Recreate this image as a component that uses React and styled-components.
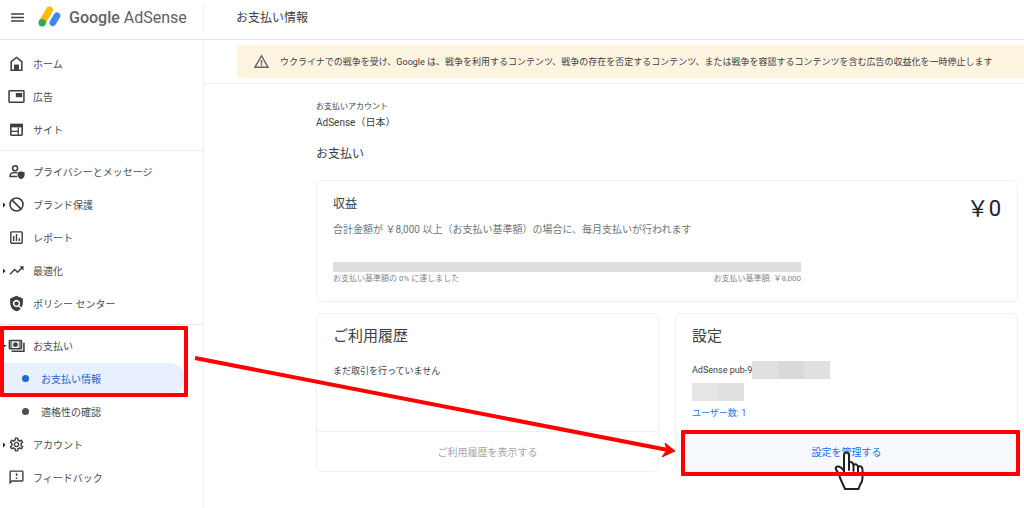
import React from 'react';
import styled, { createGlobalStyle, css } from 'styled-components';
import {
  MdArrowDropDown,
  MdArrowRight,
  MdMenu,
  MdOutlineAssessment,
  MdOutlineFeedback,
  MdOutlineSettings,
  MdPolicy,
  MdTrendingUp,
  MdWarningAmber,
} from 'react-icons/md';

const HomeIcon = () => (
  <svg viewBox="0 0 24 24" aria-hidden="true">
    <path d="M4.500 21.500V9.500L12 3.500l7.500 6v12z" fill="none" stroke="currentColor" strokeWidth="2.200" />
    <path d="M8.500 21v-7.500h7V21z" fill="currentColor" />
  </svg>
);

const AdsIcon = () => (
  <svg viewBox="0 0 24 24" aria-hidden="true">
    <rect x="1.500" y="4" width="21" height="16" rx="1" fill="none" stroke="currentColor" strokeWidth="2.200" />
    <path d="M11 7h9v6h-9z" fill="currentColor" />
  </svg>
);

const SitesIcon = () => (
  <svg viewBox="0 0 24 24" aria-hidden="true">
    <rect x="4" y="5" width="16" height="15" rx="1" fill="none" stroke="currentColor" strokeWidth="2.200" />
    <path d="M3 4h18v5H3z" fill="currentColor" />
    <path d="M4 14.500h10M14.500 9v11" fill="none" stroke="currentColor" strokeWidth="1.800" />
  </svg>
);

const PrivacyIcon = () => (
  <svg viewBox="0 0 24 24" aria-hidden="true">
    <g fill="none" stroke="currentColor" strokeWidth="2.200">
      <circle cx="10" cy="7.500" r="3.500" />
      <path d="M13 19H3v-1.500c0-2.500 4-4 7-4 1 0 2 .1 3 .4" />
    </g>
    <path d="M18.500 11.500l5 2v3.200c0 3-2 5.300-5 6.300-3-1-5-3.300-5-6.300v-3.200z" fill="currentColor" />
  </svg>
);

const BlockIcon = () => (
  <svg viewBox="0 0 24 24" aria-hidden="true">
    <g fill="none" stroke="currentColor" strokeWidth="2.300">
      <circle cx="12" cy="12" r="9.200" />
      <path d="M5.500 5.500l13 13" />
    </g>
  </svg>
);

const PaymentsIcon = () => (
  <svg viewBox="0 0 24 24" aria-hidden="true">
    <g fill="none" stroke="currentColor" strokeWidth="2.200">
      <rect x="2" y="5" width="17" height="11.500" rx="1" />
      <path d="M22.500 8v12H5" />
    </g>
    <circle cx="10.500" cy="10.800" r="3.300" fill="currentColor" />
    <path d="M3 6h3v9.500H3zM15 6h3v9.500h-3z" fill="currentColor" opacity=".6" />
  </svg>
);

const Logo = () => (
  <LogoMark viewBox="0 0 24 22" aria-hidden="true">
    <path d="M19 9.700L14.800 16.800" stroke="#4285f4" strokeWidth="6.600" strokeLinecap="round" />
    <path d="M11.500 4L4.500 16" stroke="#fbbc04" strokeWidth="7" strokeLinecap="round" />
    <circle cx="4.200" cy="16.700" r="3.700" fill="#34a853" />
  </LogoMark>
);

const sections = [
  [
    { label: 'ホーム', icon: HomeIcon },
    { label: '広告', icon: AdsIcon },
    { label: 'サイト', icon: SitesIcon },
  ],
  [
    { label: 'プライバシーとメッセージ', icon: PrivacyIcon },
    { label: 'ブランド保護', icon: BlockIcon, arrow: MdArrowRight },
    { label: 'レポート', icon: MdOutlineAssessment },
    { label: '最適化', icon: MdTrendingUp, arrow: MdArrowRight },
    { label: 'ポリシー センター', icon: MdPolicy },
  ],
];

const NavItem = ({ label, icon: Icon, arrow: Arrow }) => (
  <NavLink href="#">
    <Expander>{Arrow && <Arrow />}</Expander>
    <IconBox>
      <Icon />
    </IconBox>
    {label}
  </NavLink>
);

const App = () => {
  return (
    <Page>
      <GlobalStyle />
      <Header>
        <Brand>
          <MenuButton aria-label="メニュー">
            <MdMenu />
          </MenuButton>
          <Logo />
          <BrandName>
            <b>Google</b> AdSense
          </BrandName>
        </Brand>
        <PageTitle>お支払い情報</PageTitle>
      </Header>

      <Body>
        <Sidebar>
          {sections.map((items) => (
            <Section key={items[0].label}>
              {items.map((item) => (
                <NavItem key={item.label} {...item} />
              ))}
            </Section>
          ))}
          <Section>
            <Marked>
              <NavItem label="お支払い" icon={PaymentsIcon} arrow={MdArrowDropDown} />
              <SubLink href="#" $active aria-current="page">
                <Dot />
                お支払い情報
              </SubLink>
              <NavHighlight />
            </Marked>
            <SubLink href="#">
              <Dot />
              適格性の確認
            </SubLink>
            <NavItem label="アカウント" icon={MdOutlineSettings} arrow={MdArrowRight} />
            <NavItem label="フィードバック" icon={MdOutlineFeedback} />
          </Section>
        </Sidebar>

        <Main>
          <BannerArea>
            <Banner>
              <MdWarningAmber />
              ウクライナでの戦争を受け、Google は、戦争を利用するコンテンツ、戦争の存在を否定するコンテンツ、または戦争を容認するコンテンツを含む広告の収益化を一時停止します
            </Banner>
          </BannerArea>

          <Content>
            <AccountLabel>お支払いアカウント</AccountLabel>
            <AccountName>AdSense（日本）</AccountName>
            <Heading>お支払い</Heading>

            <EarningsCard>
              <Progress>
                <CardLabel>収益</CardLabel>
                <Description>
                  合計金額が ￥8,000 以上（お支払い基準額）の場合に、毎月支払いが行われます
                </Description>
                <Track />
                <TrackLabels>
                  <span>お支払い基準額の 0% に達しました</span>
                  <span>お支払い基準額: ￥8,000</span>
                </TrackLabels>
              </Progress>
              <Amount>￥0</Amount>
            </EarningsCard>

            <CardRow>
              <Card>
                <CardBody>
                  <CardTitle>ご利用履歴</CardTitle>
                  <Text>まだ取引を行っていません</Text>
                </CardBody>
                <CardAction disabled>ご利用履歴を表示する</CardAction>
              </Card>
              <Card>
                <CardBody>
                  <CardTitle>設定</CardTitle>
                  <Text>
                    AdSense pub-9
                    <Mask $tones={['#e0e0e0', '#d9d9d9', '#e0e0e0']} />
                  </Text>
                  <MaskRow>
                    <Mask $tones={['#e5e5e5', '#e0e0e0']} />
                  </MaskRow>
                  <UserLink href="#">ユーザー数: 1</UserLink>
                </CardBody>
                <ActionArea>
                  <CardAction $hovered>設定を管理する</CardAction>
                  <HandCursor viewBox="0 0 30 40" aria-hidden="true">
                    <path
                      d="M10 23V4.500Q10 1.500 12.500 1.500T15 4.500V11.500Q18.500 10 19.500 14Q22.500 12 24 15.500Q28.500 14 28.500 19V27Q28.500 31 26 34L24.500 38H11L6.500 28Q5 22 2 18.500Q1 15.500 4 15.500Q7 15.500 10 20"
                      fill="#fff"
                    />
                    <path d="M15 11.500V19M19.500 14V20M24 15.500V21" />
                  </HandCursor>
                  <ActionHighlight />
                </ActionArea>
              </Card>
            </CardRow>
          </Content>
        </Main>
      </Body>

      <Arrow viewBox="0 0 484 104" aria-hidden="true">
        <path d="M1 5L474 97" stroke="#f00" strokeWidth="4" />
        <path d="M481 98L468 104L473 97L471 90z" fill="#f00" stroke="#f00" />
      </Arrow>
    </Page>
  );
};

export default App;

const GlobalStyle = createGlobalStyle`
  * {
    box-sizing: border-box;
  }

  body {
    margin: 0;
    background-color: white;
    color: #3c4043;
    font-family: Roboto, 'Noto Sans CJK JP', sans-serif;
    font-size: 10px;
  }

  h1, h2, h3, p {
    margin: 0;
    font-weight: 400;
  }

  a {
    color: inherit;
    text-decoration: none;
  }

  button {
    font-family: inherit;
    border: none;
    padding: 0;
    background: none;
    color: inherit;
  }
`;

const Page = styled.div`
  position: relative;
  min-height: 100vh;
  display: flex;
  flex-direction: column;
  overflow: hidden;
`;

const Header = styled.header`
  display: flex;
  align-items: center;
  height: 40px;
  padding-bottom: 4px;
  border-bottom: 1px solid #e4e5e6;
`;

const Brand = styled.div`
  display: flex;
  align-items: center;
  width: 204px;
  height: 28px;
  padding-left: 9px;
  border-right: 1px solid #f1f1f1;
`;

const MenuButton = styled.button`
  display: flex;
  font-size: 17px;
`;

const LogoMark = styled.svg`
  width: 24px;
  height: 22px;
  margin: 0 7px 2px 12px;
  fill: none;
`;

const BrandName = styled.span`
  font-size: 16px;
  color: #5f6368;
  white-space: nowrap;

  b {
    font-weight: 500;
  }
`;

const PageTitle = styled.h1`
  padding-left: 32px;
  font-size: 12px;
  line-height: 20px;
`;

const Body = styled.div`
  flex: 1;
  display: flex;
`;

const Sidebar = styled.nav`
  flex: none;
  width: 204px;
  padding-top: 3px;
  border-right: 1px solid #f1f1f1;
`;

const Section = styled.div`
  padding: 4px 0;

  & + & {
    border-top: 1px solid #ececec;
  }
`;

const row = css`
  display: flex;
  align-items: center;
  height: 33px;
  color: #4a4e51;
  white-space: nowrap;
`;

const NavLink = styled.a`
  ${row}
`;

const Expander = styled.span`
  display: flex;
  width: 8px;
  color: #202124;
  font-size: 12px;

  svg {
    flex: none;
    margin-left: -2px;
  }
`;

const IconBox = styled.span`
  display: flex;
  width: 17px;
  margin-right: 8px;
  color: #3c4043;

  svg {
    width: 17px;
    height: 17px;
  }
`;

const SubLink = styled.a`
  ${row}
  margin-right: 18px;
  padding-left: 22px;

  ${({ $active }) =>
    $active &&
    css`
      height: 31px;
      margin-top: 1px;
      margin-bottom: 1px;
      color: #1967d2;
      background-color: #e8f0fe;
      border-radius: 0 16px 16px 0;
    `}
`;

const Dot = styled.span`
  width: 7px;
  height: 7px;
  margin-right: 12px;
  border-radius: 50%;
  background-color: currentColor;
`;

const Marked = styled.div`
  position: relative;
`;

const NavHighlight = styled.span`
  position: absolute;
  inset: -3px 15px -3px 0;
  border: 4px solid #f00;
  border-radius: 1px;
  pointer-events: none;
`;

const Main = styled.main`
  flex: 1;
  min-width: 0;
`;

const BannerArea = styled.div`
  padding: 5px 0 5px 33px;
  border-bottom: 1px solid #f1f1f1;
`;

const Banner = styled.div`
  display: flex;
  align-items: center;
  height: 33px;
  padding-left: 16px;
  border-radius: 4px 0 0 4px;
  background-color: #fef5e0;
  font-size: 9px;
  white-space: nowrap;

  svg {
    flex: none;
    width: 17px;
    height: 17px;
    margin-right: 10px;
    color: #5f6368;
  }
`;

const Content = styled.div`
  padding: 16px 6px 0 112px;
`;

const AccountLabel = styled.p`
  font-size: 8px;
  line-height: 14px;
`;

const AccountName = styled.p`
  font-size: 10px;
  line-height: 18px;
`;

const Heading = styled.h2`
  margin: 12px 0 16px;
  font-size: 12px;
  line-height: 20px;
`;

const Card = styled.section`
  flex: 1;
  display: flex;
  flex-direction: column;
  border: 1px solid #f0f0f0;
  border-radius: 6px;
`;

const EarningsCard = styled.section`
  display: flex;
  justify-content: space-between;
  padding: 15px 16px;
  border: 1px solid #f0f0f0;
  border-radius: 6px;
`;

const Progress = styled.div`
  flex: 0 1 468px;
`;

const CardLabel = styled.h3`
  font-size: 12px;
  line-height: 16px;
`;

const Description = styled.p`
  margin: 10px 0 24px;
  color: #70757a;
  font-size: 10px;
  line-height: 16px;
  white-space: nowrap;
`;

const Track = styled.div`
  height: 10px;
  background-color: #dedede;
`;

const TrackLabels = styled.div`
  display: flex;
  justify-content: space-between;
  color: #80868b;
  font-size: 8px;
  line-height: 14px;
`;

const Amount = styled.div`
  color: #202124;
  font-size: 22px;
  line-height: 26px;
`;

const CardRow = styled.div`
  display: flex;
  gap: 16px;
  margin-top: 11px;
`;

const CardBody = styled.div`
  flex: 1;
  min-height: 117px;
  padding: 12px 16px 6px;
`;

const CardTitle = styled.h3`
  font-size: 15px;
  line-height: 20px;
  margin-bottom: 15px;
`;

const Text = styled.p`
  display: flex;
  align-items: center;
  height: 18px;
  font-size: 9px;
`;

const MaskRow = styled.div`
  display: flex;
  height: 18px;
  margin: 4px 0;
`;

const Mask = styled.span`
  width: ${({ $tones }) => $tones.length * 26}px;
  height: 100%;
  background: linear-gradient(
    to right,
    ${({ $tones }) => $tones.map((tone, i) => `${tone} ${i * 26}px ${(i + 1) * 26}px`).join(', ')}
  );
`;

const UserLink = styled.a`
  display: block;
  color: #1a73e8;
  font-size: 9px;
  line-height: 16px;
`;

const ActionArea = styled.div`
  position: relative;
`;

const CardAction = styled.button`
  display: block;
  width: 100%;
  height: 40px;
  border-top: 1px solid #f0f0f0;
  border-radius: 0 0 6px 6px;
  color: #1a73e8;
  font-size: 10px;

  &:disabled {
    color: #a6a6a6;
  }

  ${({ $hovered }) =>
    $hovered &&
    css`
      border-top-color: #f6fafe;
      background-color: #f6fafe;
    `}
`;

const ActionHighlight = styled.span`
  position: absolute;
  inset: -1px -3px -5px 5px;
  border: 4px solid #f00;
  border-radius: 1px;
  pointer-events: none;
`;

const HandCursor = styled.svg`
  position: absolute;
  top: 20px;
  left: calc(50% - 13px);
  width: 30px;
  height: 40px;
  fill: none;
  stroke: #222;
  stroke-width: 2;
  stroke-linejoin: round;
  stroke-linecap: round;
  pointer-events: none;
`;

const Arrow = styled.svg`
  position: absolute;
  top: 353px;
  left: 194px;
  width: 484px;
  height: 104px;
  pointer-events: none;
`;
